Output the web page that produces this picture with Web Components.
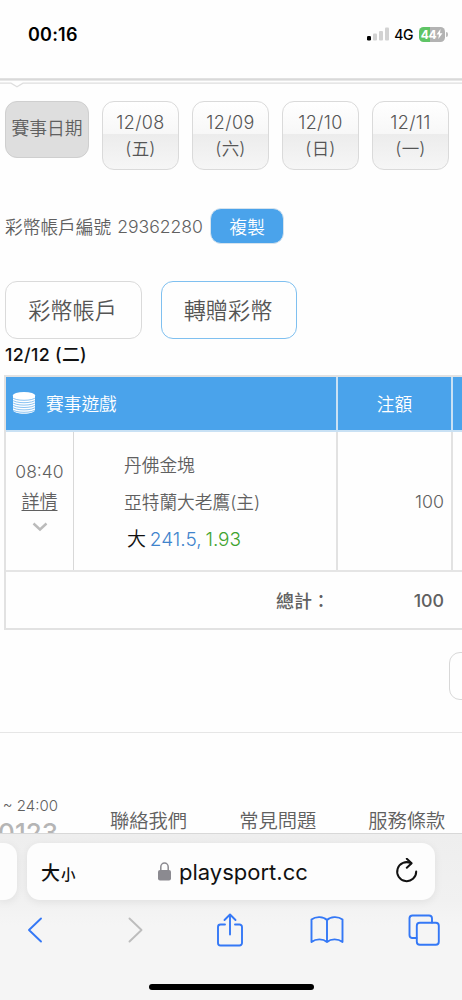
<!DOCTYPE html>
<html lang="zh-Hant">
<head>
<meta charset="utf-8">
<meta name="viewport" content="width=device-width, initial-scale=1">
<title>playsport.cc</title>
<style>
    body {
        margin: 0;
        width: 462px;
        height: 1000px;
        overflow: hidden;
        background: #fefefe;
        color: #606060;
        font-family: Inter, "Noto Sans CJK TC", sans-serif;
        font-weight: 350;
    }
</style>
</head>
<body>
<phone-screen>
    <status-bar slot="status" time="00:16" network="4G" battery="44"></status-bar>
    <date-tabs></date-tabs>
    <account-row number="29362280"></account-row>
    <action-row>
        <action-button>彩幣帳戶</action-button>
        <action-button active>轉贈彩幣</action-button>
    </action-row>
    <day-heading>12/12 (二)</day-heading>
    <bet-table></bet-table>
    <page-more></page-more>
    <site-footer></site-footer>
    <browser-bar slot="browser" host="playsport.cc"></browser-bar>
</phone-screen>

<script>
class PhoneScreen extends HTMLElement {
    constructor() {
        super();
        this.attachShadow({ mode: "open" }).innerHTML = `
            <style>
                :host {
                    display: flex;
                    flex-direction: column;
                    width: 462px;
                    height: 1000px;
                    overflow: hidden;
                }
                main {
                    flex: 1;
                    min-height: 0;
                    overflow: hidden;
                }
            </style>
            <slot name="status"></slot>
            <main><slot></slot></main>
            <slot name="browser"></slot>
        `;
    }
}

class StatusBar extends HTMLElement {
    connectedCallback() {
        this.attachShadow({ mode: "open" }).innerHTML = `
            <style>
                :host {
                    display: block;
                    flex: none;
                    height: 84px;
                    color: #000;
                }
                .bar {
                    height: 78px;
                    box-sizing: border-box;
                    padding: 0 14px 10px 28px;
                    display: flex;
                    align-items: center;
                }
                .time {
                    flex: 1;
                    font-size: 18px;
                    font-weight: 600;
                    letter-spacing: .2px;
                }
                .net {
                    font-size: 14px;
                    font-weight: 500;
                    letter-spacing: -.4px;
                    margin: 0 6px 0 5px;
                }
                .battery {
                    width: 26px;
                    height: 15px;
                    border-radius: 4.5px;
                    background: linear-gradient(90deg, #5fc466 44%, #b3b3b3 44%);
                    color: #fff;
                    display: flex;
                    align-items: center;
                    justify-content: center;
                    font-size: 12px;
                    font-weight: 700;
                    letter-spacing: -.3px;
                }
                .tip {
                    width: 2px;
                    height: 5px;
                    margin-left: 1px;
                    border-radius: 0 2px 2px 0;
                    background: #bbb;
                }
                .edge {
                    display: block;
                }
            </style>
            <div class="bar">
                <span class="time">${this.getAttribute("time")}</span>
                <svg width="22" height="14" viewBox="0 0 22 14">
                    <rect x="0" y="9" width="4" height="4.500" rx="1.200" fill="#000"/>
                    <rect x="6" y="6.500" width="4" height="7" rx="1" fill="#d2d2d2"/>
                    <rect x="12" y="4" width="4" height="9.500" rx="1" fill="#d2d2d2"/>
                    <rect x="18" y="0.500" width="4" height="13" rx="1" fill="#d2d2d2"/>
                </svg>
                <span class="net">${this.getAttribute("network")}</span>
                <span class="battery">${this.getAttribute("battery")}<svg width="7" height="10" viewBox="0 0 7 10"><path d="M4.500 0L.5 5.500H3L2.300 10L6.500 4.300H4z" fill="#fff"/></svg></span>
                <i class="tip"></i>
            </div>
            <svg class="edge" width="462" height="12" viewBox="0 0 462 12">
                <rect width="462" height="1" y="0.500" fill="#c4c4c4"/>
                <rect width="462" height="1" y="1.500" fill="#d2d2d2"/>
                <path d="M0 5.200H11L17 8.800L23 5.200H462" fill="none" stroke="#dedede" stroke-width="1.200"/>
            </svg>
        `;
    }
}

class DateTabs extends HTMLElement {
    connectedCallback() {
        const days = [["12/08", "五"], ["12/09", "六"], ["12/10", "日"], ["12/11", "一"]];
        this.attachShadow({ mode: "open" }).innerHTML = `
            <style>
                :host {
                    display: flex;
                    align-items: flex-start;
                    gap: 13px;
                    height: 69px;
                    padding: 17px 0 0 5px;
                }
                div {
                    box-sizing: border-box;
                    width: 77px;
                    height: 69px;
                    padding-top: 8px;
                    border: 1px solid #dadada;
                    border-radius: 12px;
                    background: linear-gradient(#fff, #f7f7f7 48%, #ececec 48%, #f6f6f6);
                    text-align: center;
                    color: #555;
                    font-size: 18px;
                    line-height: 26px;
                    letter-spacing: .4px;
                }
                .label {
                    width: 84px;
                    height: 57px;
                    padding: 0;
                    line-height: 54px;
                    border-color: #cfcfcf;
                    background: #dedede;
                    color: #606060;
                    font-size: 17.800px;
                    letter-spacing: 0;
                    white-space: nowrap;
                }
                small {
                    font-size: 17.500px;
                    letter-spacing: .2px;
                }
            </style>
            <div class="label">賽事日期</div>
            ${days.map(([date, day]) => `<div>${date}<br><small>(${day})</small></div>`).join("")}
        `;
    }
}

class AccountRow extends HTMLElement {
    connectedCallback() {
        this.attachShadow({ mode: "open" }).innerHTML = `
            <style>
                :host {
                    display: flex;
                    align-items: center;
                    height: 36px;
                    padding: 38px 0 0 5px;
                    font-size: 17.700px;
                }
                .number {
                    margin: 0 7px 0 6px;
                    font-size: 17.600px;
                    width: 86px;
                    white-space: nowrap;
                }
                button {
                    width: 74px;
                    height: 36px;
                    padding: 0 0 1px;
                    border: 1px solid #d5e3ee;
                    border-radius: 11px;
                    background: #4aa3eb;
                    color: #fff;
                    font: inherit;
                }
            </style>
            <span>彩幣帳戶編號</span>
            <span class="number">${this.getAttribute("number")}</span>
            <button>複製</button>
        `;
    }
}

class ActionRow extends HTMLElement {
    constructor() {
        super();
        this.attachShadow({ mode: "open" }).innerHTML = `
            <style>
                :host {
                    display: flex;
                    gap: 19px;
                    padding: 37px 0 0 5px;
                }
            </style>
            <slot></slot>
        `;
    }
}

class ActionButton extends HTMLElement {
    constructor() {
        super();
        this.attachShadow({ mode: "open" }).innerHTML = `
            <style>
                :host {
                    display: flex;
                    align-items: center;
                    justify-content: center;
                    box-sizing: border-box;
                    width: 137px;
                    height: 58px;
                    padding: 0 2px 3px 0;
                    border: 1px solid #dadada;
                    border-radius: 12px;
                    color: #555;
                    font-size: 22.200px;
                }
                :host([active]) {
                    width: 136px;
                    border-color: #7fc0f0;
                }
            </style>
            <slot></slot>
        `;
    }
}

class DayHeading extends HTMLElement {
    constructor() {
        super();
        this.attachShadow({ mode: "open" }).innerHTML = `
            <style>
                :host {
                    display: block;
                    height: 36px;
                    padding-left: 5px;
                    color: #111;
                    font-size: 17.800px;
                    font-weight: 500;
                    letter-spacing: .35px;
                    line-height: 31px;
                }
            </style>
            <slot></slot>
        `;
    }
}

class BetTable extends HTMLElement {
    connectedCallback() {
        this.attachShadow({ mode: "open" }).innerHTML = `
            <style>
                :host {
                    display: block;
                    margin-left: 4px;
                    border: solid #e2e2e2;
                    border-width: 2px 0 2px 2px;
                    font-size: 17.700px;
                }
                .row {
                    display: flex;
                    box-sizing: border-box;
                }
                .row > * {
                    box-sizing: border-box;
                    border-right: 2px solid #e2e2e2;
                    flex: none;
                }
                .row > :last-child {
                    border: 0;
                    flex: 1;
                }
                .head {
                    height: 55px;
                    border-bottom: 2px solid #c9e1f4;
                    background: #4aa3eb;
                    color: #fff;
                }
                .head > * {
                    border-right-color: #c9e1f4;
                }
                .game {
                    width: 332px;
                    display: flex;
                    align-items: center;
                    gap: 10px;
                    padding: 0 0 1px 6px;
                }
                .stake {
                    width: 115px;
                    display: flex;
                    align-items: center;
                    justify-content: center;
                    padding-bottom: 1px;
                }
                .bet {
                    height: 140px;
                    border-bottom: 2px solid #e5e5e5;
                }
                .when {
                    width: 68px;
                    border-right-width: 1px;
                    border-right-color: #d8d8d8;
                    display: flex;
                    flex-direction: column;
                    align-items: center;
                    padding-top: 26px;
                    font-size: 17.500px;
                    line-height: 28px;
                }
                .when u {
                    margin-top: 2px;
                    font-size: 18px;
                    text-underline-offset: 2px;
                    text-decoration-thickness: 1px;
                }
                .when svg {
                    margin-top: 6px;
                }
                .pick {
                    width: 264px;
                    padding: 19px 0 0 50px;
                    line-height: 30px;
                }
                .pick p {
                    margin: 0 0 7px;
                }
                .pick .odds {
                    padding-left: 3px;
                    color: #111;
                    font-size: 19px;
                    word-spacing: -1.500px;
                }
                .line {
                    color: #3f84cc;
                }
                .rate {
                    color: #3fa32f;
                }
                .money {
                    width: 115px;
                    display: flex;
                    align-items: center;
                    justify-content: flex-end;
                    padding-right: 7px;
                    font-size: 17.800px;
                }
                .total {
                    height: 56px;
                    font-size: 18px;
                    font-weight: 500;
                }
                .total > * {
                    border-color: transparent;
                }
                .sum {
                    width: 332px;
                    display: flex;
                    align-items: center;
                    justify-content: flex-end;
                    padding: 0 6px 1px 0;
                }
            </style>
            <div class="row head">
                <div class="game">
                    <svg width="24" height="24" viewBox="0 0 24 24">
                        <path d="M1 5V19C1 21 6 22.800 12 22.800S23 21 23 19V5z" fill="#fff"/>
                        <ellipse cx="12" cy="4.700" rx="11.300" ry="3.700" fill="#fff"/>
                        <g fill="none" stroke="#4aa3eb" stroke-width=".65">
                            <path d="M0 6C2 10.400 22 10.400 24 6"/>
                            <path d="M0 8.400C2 12.800 22 12.800 24 8.400"/>
                            <path d="M0 10.800C2 15.200 22 15.200 24 10.800"/>
                            <path d="M0 13.200C2 17.600 22 17.600 24 13.200"/>
                            <path d="M0 15.600C2 20 22 20 24 15.600"/>
                            <path d="M0 18C2 22.400 22 22.400 24 18"/>
                        </g>
                    </svg>
                    <span>賽事遊戲</span>
                </div>
                <div class="stake">注額</div>
                <div></div>
            </div>
            <div class="row bet">
                <div class="when">
                    <span>08:40</span>
                    <u>詳情</u>
                    <svg width="16" height="10" viewBox="0 0 16 10"><path d="M1.500 1.500L8 7.500L14.500 1.500" fill="none" stroke="#bbb" stroke-width="2.400"/></svg>
                </div>
                <div class="pick">
                    <p>丹佛金塊</p>
                    <p>亞特蘭大老鷹(主)</p>
                    <p class="odds">大 <span class="line">241.5,</span> <span class="rate">1.93</span></p>
                </div>
                <div class="money">100</div>
                <div></div>
            </div>
            <div class="row total">
                <div class="sum">總計：</div>
                <div class="money">100</div>
                <div></div>
            </div>
        `;
    }
}

class PageMore extends HTMLElement {
    constructor() {
        super();
        this.attachShadow({ mode: "open" }).innerHTML = `
            <style>
                :host {
                    display: flex;
                    justify-content: flex-end;
                    height: 102px;
                    overflow: hidden;
                    border-bottom: 1px solid #e6e6e6;
                }
                div {
                    box-sizing: border-box;
                    width: 60px;
                    height: 48px;
                    margin: 22px -47px 0 0;
                    border: 1.500px solid #d8d8d8;
                    border-radius: 11px;
                }
            </style>
            <div></div>
        `;
    }
}

class SiteFooter extends HTMLElement {
    constructor() {
        super();
        this.attachShadow({ mode: "open" }).innerHTML = `
            <style>
                :host {
                    display: flex;
                    height: 100px;
                    overflow: hidden;
                }
                .contact {
                    width: 58px;
                    padding-top: 64px;
                    display: flex;
                    flex-direction: column;
                    align-items: flex-end;
                    white-space: nowrap;
                    font-size: 15px;
                    line-height: 18px;
                }
                .phone {
                    margin-top: 4px;
                    color: #b5b5b5;
                    font-size: 26px;
                    font-weight: 500;
                    line-height: 28px;
                }
                nav {
                    display: flex;
                    gap: 52px;
                    padding: 74px 0 0 52px;
                    white-space: nowrap;
                    font-size: 19.300px;
                    line-height: 28px;
                }
            </style>
            <div class="contact"><span>0 ~ 24:00</span><span class="phone">0123</span></div>
            <nav><span>聯絡我們</span><span>常見問題</span><span>服務條款</span></nav>
        `;
    }
}

class BrowserBar extends HTMLElement {
    connectedCallback() {
        this.attachShadow({ mode: "open" }).innerHTML = `
            <style>
                :host {
                    display: flex;
                    flex-direction: column;
                    flex: none;
                    box-sizing: border-box;
                    height: 167px;
                    border-top: 1px solid #d8d8d8;
                    background: linear-gradient(#eee, #f1f1f1 40%, #f5f5f5 55%);
                    color: #111;
                }
                .tabs {
                    display: flex;
                    gap: 10px;
                    padding-top: 9px;
                }
                .tab {
                    box-sizing: border-box;
                    height: 57px;
                    border-radius: 13px;
                    background: #fdfdfd;
                    box-shadow: 0 2px 9px rgba(0, 0, 0, .07);
                }
                .previous {
                    width: 17px;
                    border-radius: 0 13px 13px 0;
                }
                .current {
                    width: 408px;
                    display: flex;
                    align-items: center;
                    padding: 0 16px 0 14px;
                    font-weight: 400;
                }
                .size {
                    width: 117px;
                    font-size: 19px;
                    font-weight: 500;
                }
                .size small {
                    margin-left: 1px;
                    font-size: 14.500px;
                }
                .host {
                    flex: 1;
                    margin-left: 8px;
                    font-size: 22px;
                }
                .tools {
                    display: flex;
                    align-items: center;
                    height: 36px;
                    padding: 12px 0 0 26px;
                    fill: none;
                    stroke: #3478f6;
                    stroke-width: 1.900;
                    stroke-linecap: round;
                    stroke-linejoin: round;
                }
                .tools svg {
                    flex: none;
                }
                .forward {
                    margin: 0 72px 0 82px;
                }
                .book {
                    margin: 0 64px 0 66px;
                }
                .home {
                    width: 165px;
                    height: 6px;
                    margin: 36px 0 0 149px;
                    border-radius: 3px;
                    background: #000;
                }
            </style>
            <div class="tabs">
                <div class="tab previous"></div>
                <div class="tab current">
                    <span class="size">大<small>小</small></span>
                    <svg width="13" height="19" viewBox="0 0 13 19">
                        <rect x="0" y="8" width="13" height="10.500" rx="2" fill="#8b8a90"/>
                        <path d="M2.800 8.500V5A3.700 4 0 0 1 10.200 5V8.500" fill="none" stroke="#8b8a90" stroke-width="1.500"/>
                    </svg>
                    <span class="host">${this.getAttribute("host")}</span>
                    <svg width="26" height="28" viewBox="0 0 26 28" fill="none" stroke="#111" stroke-width="2" stroke-linecap="round" stroke-linejoin="round">
                        <path d="M18 5.200A9.500 9.500 0 1 0 23.200 13.500"/>
                        <path d="M13.800 0.800L18.600 5.200L13.800 9.800"/>
                    </svg>
                </div>
            </div>
            <div class="tools">
                <svg width="18" height="30" viewBox="0 0 18 30"><path d="M15 3.500L3 15L15 26.500"/></svg>
                <svg class="forward" width="18" height="30" viewBox="0 0 18 30" stroke="#bdbdbd"><path d="M3.500 3.500L15.500 15L3.500 26.500"/></svg>
                <svg width="28" height="36" viewBox="0 0 28 36">
                    <path d="M9 12.500H4.500A2.500 2.500 0 0 0 2 15V31A2.500 2.500 0 0 0 4.500 33.500H23.500A2.500 2.500 0 0 0 26 31V15A2.500 2.500 0 0 0 23.500 12.500H19"/>
                    <path d="M14 22.500V3M8.500 8L14 2.500L19.500 8"/>
                </svg>
                <svg class="book" width="34" height="30" viewBox="0 0 34 30">
                    <path d="M17 5C13.500 1.500 6 1 1.500 4.500V27C6 23.500 13 23.500 17 27C21 23.500 28 23.500 32.500 27V4.500C28 1 20.500 1.500 17 5zV27"/>
                </svg>
                <svg width="32" height="32" viewBox="0 0 32 32">
                    <path d="M8.500 24H4A3 3 0 0 1 1.500 21V4A3 3 0 0 1 4.500 1.500H21A3 3 0 0 1 24 4.500V8.500"/>
                    <rect x="8.800" y="8.800" width="22" height="22" rx="3"/>
                </svg>
            </div>
            <div class="home"></div>
        `;
    }
}

customElements.define("phone-screen", PhoneScreen);
customElements.define("status-bar", StatusBar);
customElements.define("date-tabs", DateTabs);
customElements.define("account-row", AccountRow);
customElements.define("action-row", ActionRow);
customElements.define("action-button", ActionButton);
customElements.define("day-heading", DayHeading);
customElements.define("bet-table", BetTable);
customElements.define("page-more", PageMore);
customElements.define("site-footer", SiteFooter);
customElements.define("browser-bar", BrowserBar);
</script>
</body>
</html>
